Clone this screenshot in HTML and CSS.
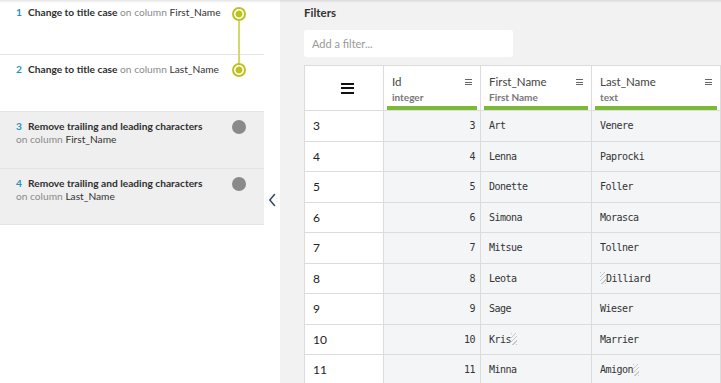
FILE: index.html
```html
<!DOCTYPE html>
<html>
<head>
<meta charset="utf-8">
<link rel="stylesheet" href="styles.css">
</head>
<body>
<div class="app">
  <div class="topshadow"></div>
  <aside class="steps">
    <div class="step step-active step-first">
      <div class="step-text"><span class="num">1</span><b>Change to title case</b> <span class="muted">on column</span> First_Name</div>
      <span class="node node-on"></span>
      <span class="link"></span>
    </div>
    <div class="step step-active">
      <div class="step-text"><span class="num">2</span><b>Change to title case</b> <span class="muted">on column</span> Last_Name</div>
      <span class="node node-on"></span>
    </div>
    <div class="step step-off">
      <div class="step-text"><span class="num">3</span><b>Remove trailing and leading characters</b><div class="sub"><span class="muted">on column</span> First_Name</div></div>
      <span class="node node-off"></span>
    </div>
    <div class="step step-off step-last">
      <div class="step-text"><span class="num">4</span><b>Remove trailing and leading characters</b><div class="sub"><span class="muted">on column</span> Last_Name</div></div>
      <span class="node node-off"></span>
    </div>
  </aside>
  <div class="gutter">
    <svg class="chevron" width="8" height="14" viewBox="0 0 8 14"><path d="M6.5 1.5 L1.8 7 L6.5 12.5" fill="none" stroke="#3b4b5e" stroke-width="1.6" stroke-linecap="round" stroke-linejoin="round"/></svg>
  </div>
  <main class="content">
    <div class="filters-title">Filters</div>
    <div class="filter-input">Add a filter...</div>
    <div class="table">
      <div class="row head">
        <div class="cell idx-head"><span class="burger"><i></i><i></i><i></i></span></div>
        <div class="cell col-head"><div class="cname">Id</div><div class="ctype">integer</div><span class="cmenu"><i></i><i></i><i></i></span><span class="qbar"></span></div>
        <div class="cell col-head"><div class="cname">First_Name</div><div class="ctype">First Name</div><span class="cmenu"><i></i><i></i><i></i></span><span class="qbar"></span></div>
        <div class="cell col-head"><div class="cname">Last_Name</div><div class="ctype">text</div><span class="cmenu"><i></i><i></i><i></i></span><span class="qbar"></span></div>
        <div class="cell col-head"></div>
      </div>
      <div class="row"><div class="cell idx">3</div><div class="cell num-cell">3</div><div class="cell txt">Art</div><div class="cell txt">Venere</div><div class="cell txt"></div></div>
      <div class="row"><div class="cell idx">4</div><div class="cell num-cell">4</div><div class="cell txt">Lenna</div><div class="cell txt">Paprocki</div><div class="cell txt"></div></div>
      <div class="row"><div class="cell idx">5</div><div class="cell num-cell">5</div><div class="cell txt">Donette</div><div class="cell txt">Foller</div><div class="cell txt"></div></div>
      <div class="row"><div class="cell idx">6</div><div class="cell num-cell">6</div><div class="cell txt">Simona</div><div class="cell txt">Morasca</div><div class="cell txt"></div></div>
      <div class="row"><div class="cell idx">7</div><div class="cell num-cell">7</div><div class="cell txt">Mitsue</div><div class="cell txt">Tollner</div><div class="cell txt"></div></div>
      <div class="row"><div class="cell idx">8</div><div class="cell num-cell">8</div><div class="cell txt">Leota</div><div class="cell txt"><span class="ws"></span>Dilliard</div><div class="cell txt"></div></div>
      <div class="row"><div class="cell idx">9</div><div class="cell num-cell">9</div><div class="cell txt">Sage</div><div class="cell txt">Wieser</div><div class="cell txt"></div></div>
      <div class="row"><div class="cell idx">10</div><div class="cell num-cell">10</div><div class="cell txt">Kris<span class="ws"></span></div><div class="cell txt">Marrier</div><div class="cell txt"></div></div>
      <div class="row"><div class="cell idx">11</div><div class="cell num-cell">11</div><div class="cell txt">Minna</div><div class="cell txt">Amigon<span class="ws"></span></div><div class="cell txt"></div></div>
    </div>
  </main>
</div>
</body>
</html>
```
FILE: styles.css
```css
html, body {
  margin: 0;
  padding: 0;
  width: 721px;
  height: 383px;
  overflow: hidden;
  background: #f2f2f2;
  font-family: Lato, "Open Sans", sans-serif;
  color: #333;
}

.app {
  position: relative;
  display: flex;
  height: 383px;
  overflow: hidden;
}

.topshadow {
  position: absolute;
  left: 0;
  top: 0;
  right: 0;
  height: 3px;
  background: linear-gradient(rgba(0,0,0,0.10), rgba(0,0,0,0));
  pointer-events: none;
  z-index: 5;
}

.steps {
  width: 264px;
  flex: none;
  background: #fff;
  display: flex;
  flex-direction: column;
}

.step {
  position: relative;
  height: 57px;
  border-bottom: 1px solid #e4e4e4;
  padding: 8px 20px 0 16px;
  box-sizing: border-box;
  font-size: 10.2px;
  line-height: 13px;
  white-space: nowrap;
}

.step-first { height: 55px; padding-top: 6px; }

.step-last { height: 56px; }

.step-off { background: #efefef; }

.step-text b { font-weight: 700; color: #2e2e2e; }

.num {
  display: inline-block;
  width: 12px;
  font-weight: 700;
  color: #2196b8;
}

.muted { color: #8b8b8b; }

.node {
  position: absolute;
  left: 232px;
  top: 8px;
  width: 14px;
  height: 14px;
  border-radius: 50%;
  box-sizing: border-box;
  z-index: 2;
}

.step-first .node { top: 7px; }

.node-on {
  border: 2px solid #bcc31f;
  background: radial-gradient(circle, #bcc31f 0, #bcc31f 3.2px, #fff 3.8px);
}

.node-off { background: #8a8a8a; }

.link {
  position: absolute;
  left: 238px;
  top: 21px;
  width: 2px;
  height: 43px;
  background: #d3d86a;
  z-index: 1;
}

.gutter {
  width: 16px;
  flex: none;
  background: #fff;
  display: flex;
  align-items: flex-start;
  justify-content: center;
}

.chevron { margin-top: 193px; }

.content {
  flex: 1;
  padding: 0 0 0 24px;
  min-width: 0;
  overflow: hidden;
}

.filters-title {
  font-size: 11.5px;
  font-weight: 700;
  color: #333;
  margin-top: 5px;
  height: 16px;
  line-height: 16px;
}

.filter-input {
  margin-top: 9px;
  width: 209px;
  height: 27px;
  background: #fff;
  border-radius: 3px;
  box-sizing: border-box;
  padding-left: 8px;
  line-height: 27px;
  font-size: 11px;
  color: #999;
}

.table {
  margin-top: 8px;
  width: 560px;
  border-left: 1px solid #dcdcdc;
  border-top: 1px solid #dcdcdc;
}

.row {
  display: grid;
  grid-template-columns: 79px 97px 111px 129px 144px;
  height: 30.5px;
  box-sizing: border-box;
  border-bottom: 1px solid #dcdcdc;
}

.row.head { height: 45px; }

.cell {
  position: relative;
  border-right: 1px solid #dcdcdc;
  box-sizing: border-box;
  background: #f4f5f7;
  display: flex;
  align-items: center;
}

.cell.idx, .cell.idx-head { background: #fff; }

.idx {
  padding-left: 8px;
  font-size: 12px;
  color: #222;
}

.num-cell, .txt {
  font-family: "DejaVu Sans Mono", monospace;
  font-size: 10px;
  letter-spacing: -0.5px;
  color: #333;
}

.num-cell { justify-content: flex-end; padding-right: 5px; }

.txt { padding-left: 8px; }

.ws {
  display: inline-block;
  width: 6px;
  height: 12px;
  background: repeating-linear-gradient(135deg, #c8c8c8 0, #c8c8c8 1px, transparent 1px, transparent 3px);
}

.idx-head { justify-content: center; }

.burger {
  display: flex;
  flex-direction: column;
  gap: 2.5px;
  margin-left: 7px;
}

.burger i {
  display: block;
  width: 13px;
  height: 2px;
  background: #111;
}

.col-head {
  background: #fff;
  display: block;
  padding: 9px 0 0 8px;
}

.cname {
  font-size: 11.5px;
  color: #444;
  line-height: 14px;
}

.ctype {
  font-size: 10px;
  font-weight: 700;
  color: #777;
  line-height: 14px;
  margin-top: 1px;
}

.cmenu {
  position: absolute;
  right: 8px;
  top: 13px;
  display: flex;
  flex-direction: column;
  gap: 1.5px;
}

.cmenu i {
  display: block;
  width: 7px;
  height: 1px;
  background: #666;
}

.qbar {
  position: absolute;
  left: 3px;
  right: 3px;
  bottom: 0;
  height: 4px;
  background: #7cb936;
}
```
